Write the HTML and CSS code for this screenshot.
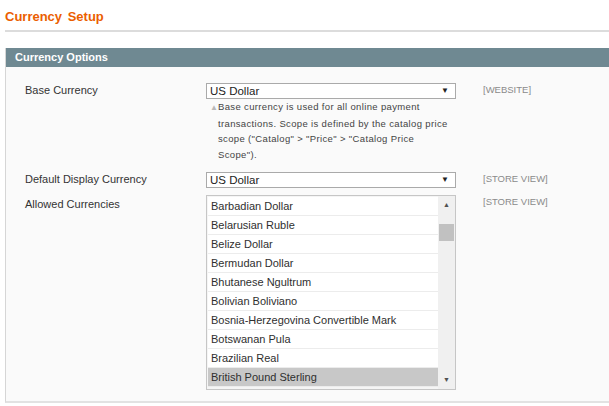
FILE: index.html
```html
<!DOCTYPE html>
<html lang="en">
<head>
    <meta charset="UTF-8">
    <title>Currency Setup</title>
    <link rel="stylesheet" href="styles.css">
</head>
<body>
    <div class="page">
        <h3 class="page-title">Currency Setup</h3>

        <div class="section">
            <div class="section-head">Currency Options</div>
            <div class="section-body">
                <!-- Base currency -->
                <div class="row">
                    <div class="label">Base Currency</div>
                    <div class="value">
                        <div class="select">US Dollar<span class="caret">&#9660;</span></div>
                        <p class="note"><span class="note-arrow">&#9650;</span>Base currency is used for all online payment transactions. Scope is defined by the catalog price scope ("Catalog" &gt; "Price" &gt; "Catalog Price Scope").</p>
                    </div>
                    <div class="scope">[WEBSITE]</div>
                </div>

                <!-- Default display currency -->
                <div class="row">
                    <div class="label">Default Display Currency</div>
                    <div class="value">
                        <div class="select">US Dollar<span class="caret">&#9660;</span></div>
                    </div>
                    <div class="scope">[STORE VIEW]</div>
                </div>

                <!-- Allowed currencies -->
                <div class="row">
                    <div class="label label-list">Allowed Currencies</div>
                    <div class="value">
                        <div class="listbox">
                            <ul class="options">
                                <li>Barbadian Dollar</li>
                                <li>Belarusian Ruble</li>
                                <li>Belize Dollar</li>
                                <li>Bermudan Dollar</li>
                                <li>Bhutanese Ngultrum</li>
                                <li>Bolivian Boliviano</li>
                                <li>Bosnia-Herzegovina Convertible Mark</li>
                                <li>Botswanan Pula</li>
                                <li>Brazilian Real</li>
                                <li class="selected">British Pound Sterling</li>
                            </ul>
                            <div class="scrollbar">
                                <span class="sb-arrow">&#9650;</span>
                                <div class="sb-track"><div class="sb-thumb"></div></div>
                                <span class="sb-arrow">&#9660;</span>
                            </div>
                        </div>
                    </div>
                    <div class="scope">[STORE VIEW]</div>
                </div>
            </div>
        </div>
    </div>
</body>
</html>
```

FILE: styles.css
```css
* {
    margin: 0;
    padding: 0;
    box-sizing: border-box;
}

body {
    font-family: 'Liberation Sans', Arial, sans-serif;
    font-size: 11px;
    color: #2f2f2f;
    background: #fff;
    overflow: hidden;
}

.page {
    padding: 9px 0 0 5px;
    margin-right: -12px;
}

.page-title {
    color: #eb5e00;
    font-size: 13px;
    font-weight: bold;
    line-height: 16px;
    word-spacing: 2px;
    padding-bottom: 5px;
    border-bottom: 2px solid #dcdcdc;
}

.section {
    margin-top: 16px;
    border: 1px solid #d6d6d6;
    border-top: none;
    border-bottom: 2px solid #e2e2e2;
    background: #fafafa;
}

.section-head {
    background: #6f8992;
    color: #fff;
    font-weight: bold;
    height: 19px;
    line-height: 19px;
    padding-left: 9px;
}

.section-body {
    padding: 16px 0 11px 19px;
}

.row {
    display: grid;
    grid-template-columns: 181px 250px auto;
    margin-bottom: 7px;
}

.row:last-child {
    margin-bottom: 0;
}

.label {
    line-height: 15px;
    color: #333;
}

.label-list {
    padding-top: 2px;
}

.select {
    position: relative;
    height: 16px;
    line-height: 14px;
    border: 1px solid #aaa;
    background: #fff;
    padding-left: 3px;
    font-size: 11.5px;
    color: #222;
}

.caret {
    position: absolute;
    right: 6px;
    top: 0;
    font-size: 8px;
    color: #222;
}

.note {
    font-size: 9.5px;
    line-height: 15.5px;
    letter-spacing: 0.35px;
    color: #444;
    padding: 0 0 3px 12px;
    text-indent: -8px;
}

.note-arrow {
    display: inline-block;
    text-indent: 0;
    width: 8px;
    font-size: 8px;
    color: #b8b8b8;
    vertical-align: 0;
}

.scope {
    font-size: 9.5px;
    color: #8a8a8a;
    line-height: 13px;
    padding-left: 27px;
}

.listbox {
    display: flex;
    height: 195px;
    border: 1px solid #c6c6c6;
    background: #f5f5f5;
    overflow: hidden;
}

.options {
    list-style: none;
    flex: 1;
    padding: 1px 0 0 1px;
}

.options li {
    height: 19px;
    line-height: 18px;
    background: #fff;
    border-bottom: 1px solid #ececec;
    padding-left: 3px;
    color: #2f2f2f;
    white-space: nowrap;
}

.options li.selected {
    background: #c8c8c8;
}

.scrollbar {
    width: 17px;
    display: flex;
    flex-direction: column;
    align-items: center;
    background: #f0f0f0;
}

.sb-arrow {
    font-size: 7px;
    line-height: 18px;
    height: 18px;
    color: #505050;
}

.sb-track {
    flex: 1;
    width: 100%;
    padding: 10px 1px 0;
}

.sb-thumb {
    height: 17px;
    background: #c1c1c1;
}
```
